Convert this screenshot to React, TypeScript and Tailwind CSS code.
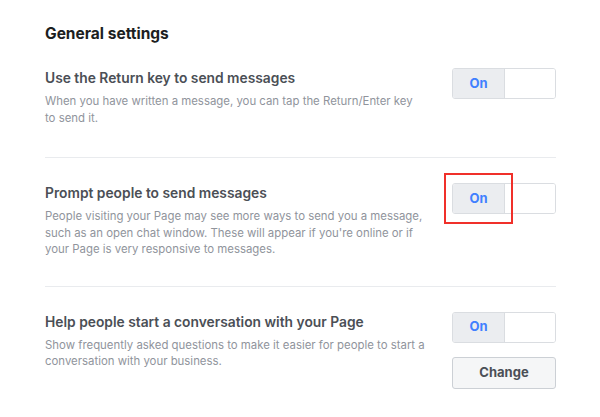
import { useState } from 'react';

interface ToggleProps {
  on: boolean;
  onChange: (v: boolean) => void;
}

function OnOffToggle({ on, onChange }: ToggleProps) {
  return (
    <div className="flex w-[104px] h-[31px] rounded-[3px] border border-[#dadde1] overflow-hidden">
      <button
        onClick={() => onChange(true)}
        className={`w-[51px] h-full text-[13px] font-bold ${
          on ? 'bg-[#ebedf0] text-[#4080ff]' : 'bg-white text-[#4b4f56]'
        }`}
      >
        {on ? 'On' : ''}
      </button>
      <button
        onClick={() => onChange(false)}
        className={`flex-1 h-full border-l border-[#dadde1] text-[13px] font-bold ${
          on ? 'bg-white' : 'bg-[#ebedf0] text-[#4b4f56]'
        }`}
      >
        {on ? '' : 'Off'}
      </button>
    </div>
  );
}

interface RowProps {
  title: string;
  desc: string;
  children: React.ReactNode;
}

function SettingRow({ title, desc, children }: RowProps) {
  return (
    <div className="flex">
      <div className="w-[383px]">
        <h3 className="text-[13.8px] leading-[20px] font-semibold text-[#4b4f56]">{title}</h3>
        <p className="mt-[5px] text-[11.4px] leading-[16.5px] text-[#90949c]">{desc}</p>
      </div>
      <div className="ml-auto flex flex-col gap-[14px]">{children}</div>
    </div>
  );
}

export default function App() {
  const [returnKey, setReturnKey] = useState(true);
  const [prompt, setPrompt] = useState(true);
  const [help, setHelp] = useState(true);

  return (
    <div
      className="w-[600px] h-[417px] bg-white pl-[45px] pr-[44px] pt-[24px] overflow-hidden"
      style={{ fontFamily: 'Inter, "Noto Sans", sans-serif' }}
    >
      <h2 className="text-[15.5px] leading-[20px] font-bold text-[#1c1e21]">General settings</h2>

      <div className="mt-[24px] pb-[31px] border-b border-[#e9ebee]">
        <SettingRow
          title="Use the Return key to send messages"
          desc={'When you have written a message, you can tap the Return/Enter key to\u00A0send it.'}
        >
          <OnOffToggle on={returnKey} onChange={setReturnKey} />
        </SettingRow>
      </div>

      <div className="pt-[25px] pb-[28px] border-b border-[#e9ebee]">
        <SettingRow
          title="Prompt people to send messages"
          desc="People visiting your Page may see more ways to send you a message, such as an open chat window. These will appear if you're online or if your Page is very responsive to messages."
        >
          <div className="relative">
            <OnOffToggle on={prompt} onChange={setPrompt} />
            <div className="pointer-events-none absolute left-[-8px] top-[-10px] w-[69px] h-[51px] border-2 border-[#f0302a]" />
          </div>
        </SettingRow>
      </div>

      <div className="pt-[25px]">
        <SettingRow
          title="Help people start a conversation with your Page"
          desc="Show frequently asked questions to make it easier for people to start a conversation with your business."
        >
          <OnOffToggle on={help} onChange={setHelp} />
          <button className="w-[104px] h-[32px] rounded-[3px] border border-[#ccd0d5] bg-[#f5f6f7] text-[13px] font-bold text-[#4b4f56]">
            Change
          </button>
        </SettingRow>
      </div>
    </div>
  );
}
